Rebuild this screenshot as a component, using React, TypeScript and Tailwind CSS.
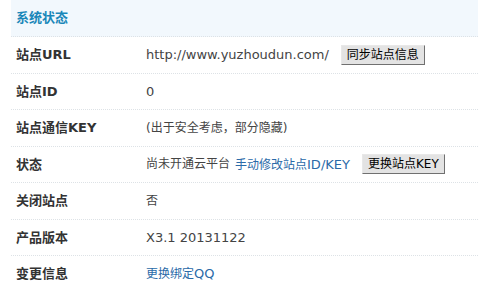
function L({ children }: { children: React.ReactNode }) {
  return <span className="text-[13px]">{children}</span>
}

function Btn({ children }: { children: React.ReactNode }) {
  return (
    <button className="ml-3 h-[20px] border border-t-[#e8e8e8] border-l-[#e8e8e8] border-r-[#707070] border-b-[#707070] bg-[#e3e3e3] px-[5px] text-[12px] leading-[18px] text-black">
      {children}
    </button>
  )
}

const rows: { label: string; value: React.ReactNode }[] = [
  {
    label: "站点URL",
    value: (
      <>
        <L>http://www.yuzhoudun.com/</L>
        <Btn>同步站点信息</Btn>
      </>
    ),
  },
  { label: "站点ID", value: <L>0</L> },
  { label: "站点通信KEY", value: <span>(出于安全考虑，部分隐藏)</span> },
  {
    label: "状态",
    value: (
      <>
        <span>尚未开通云平台</span>
        <a className="ml-[5px] text-[#2a6aa8]">
          手动修改站点<L>ID/KEY</L>
        </a>
        <Btn>更换站点KEY</Btn>
      </>
    ),
  },
  { label: "关闭站点", value: <span>否</span> },
  { label: "产品版本", value: <L>X3.1 20131122</L> },
  {
    label: "变更信息",
    value: (
      <a className="text-[#2a6aa8]">
        更换绑定<L>QQ</L>
      </a>
    ),
  },
]

export default function App() {
  const font = { fontFamily: '"DejaVu Sans", "Noto Sans CJK SC", sans-serif' }
  return (
    <div className="h-[289px] w-[478px] overflow-hidden bg-white pl-[11px]" style={font}>
      <div className="flex h-[37px] items-center border-b border-dotted border-[#dde2e6] bg-[#f2f8fd] pl-[5px]">
        <h3 className="text-[13px] font-bold text-[#1a87b9]">系统状态</h3>
      </div>
      {rows.map((r) => (
        <div key={r.label} className="flex h-[36.5px] items-center border-b border-dotted border-[#dde2e6]">
          <div className="w-[135px] pl-[5px] text-[13px] font-bold text-[#333]">{r.label}</div>
          <div className="flex items-center text-[12px] text-[#444]">{r.value}</div>
        </div>
      ))}
    </div>
  )
}
